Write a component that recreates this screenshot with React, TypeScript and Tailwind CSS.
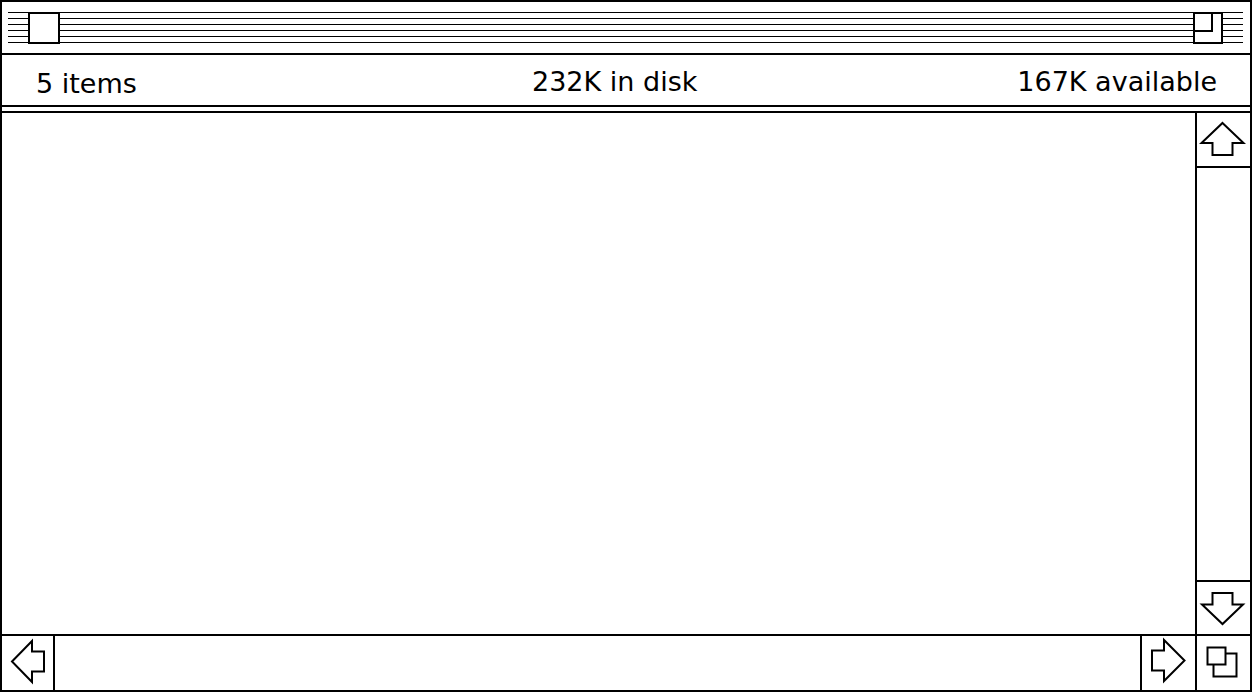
const stripes =
  "h-[31px] bg-[repeating-linear-gradient(to_bottom,black_0px,black_1.4px,transparent_1.4px,transparent_6px)]";

function Arrow({ points, w, h }: { points: string; w: number; h: number }) {
  return (
    <svg width={w} height={h} viewBox={`0 0 ${w} ${h}`} className="block">
      <polygon points={points} fill="white" stroke="black" strokeWidth="2" strokeLinejoin="miter" />
    </svg>
  );
}

function TitleBar() {
  return (
    <div className="flex h-[53px] shrink-0 items-start border-b-2 border-black pl-[6px] pr-[7px] pt-[10px]">
      <div className={`w-[20px] ${stripes}`} />
      <div className="h-[32px] w-[32px] border-2 border-black bg-white" />
      <div className={`flex-1 ${stripes}`} />
      <div className="relative h-[32px] w-[30px] border-2 border-black bg-white">
        <div className="absolute left-0 top-0 h-[18px] w-[18px] border-b-2 border-r-2 border-black" />
      </div>
      <div className={`w-[20px] ${stripes}`} />
    </div>
  );
}

function InfoBar() {
  return (
    <>
      <div className="flex h-[52px] shrink-0 items-start border-b-2 border-black pl-[34px] pr-[33px] pt-[11px] text-[27px] leading-[31px] text-black">
        <span className="mt-[2px] w-[496px]">5 items</span>
        <span>232K in disk</span>
        <span className="ml-auto">167K available</span>
      </div>
      <div className="h-[6px] shrink-0 border-b-2 border-black" />
    </>
  );
}

export default function App() {
  return (
    <div
      className="flex h-[692px] w-[1252px] flex-col border-2 border-black bg-white"
      style={{ fontFamily: '"DejaVu Sans", Verdana, sans-serif' }}
    >
      <TitleBar />
      <InfoBar />

      <div className="flex min-h-0 flex-1">
        <div className="flex-1" />
        <div className="flex w-[55px] flex-col border-l-2 border-black">
          <div className="h-[55px] border-b-2 border-black">
            <Arrow w={53} h={53} points="25.5,10 46.5,30 35.5,30 35.5,42 15.5,42 15.5,30 4.5,30" />
          </div>
          <div className="flex-1" />
          <div className="h-[54px] border-t-2 border-black">
            <Arrow w={53} h={52} points="15.5,11 35.5,11 35.5,22.5 46,22.5 25.5,42 5,22.5 15.5,22.5" />
          </div>
        </div>
      </div>

      <div className="flex h-[56px] shrink-0 border-t-2 border-black">
        <div className="w-[53px] border-r-2 border-black">
          <Arrow w={51} h={54} points="10,25.5 30,5 30,15.5 42,15.5 42,35.5 30,35.5 30,46" />
        </div>
        <div className="flex-1" />
        <div className="w-[55px] border-l-2 border-black">
          <Arrow w={53} h={54} points="10,14.5 22,14.5 22,4 42.5,24.5 22,45 22,34.5 10,34.5" />
        </div>
        <div className="w-[55px] border-l-2 border-black">
          <svg width={53} height={54} viewBox="0 0 53 54" className="block">
            <rect x="16.5" y="17.5" width="23" height="23" fill="white" stroke="black" strokeWidth="2" />
            <rect x="10.5" y="11.5" width="18" height="17" fill="white" stroke="black" strokeWidth="2" />
          </svg>
        </div>
      </div>
    </div>
  );
}
